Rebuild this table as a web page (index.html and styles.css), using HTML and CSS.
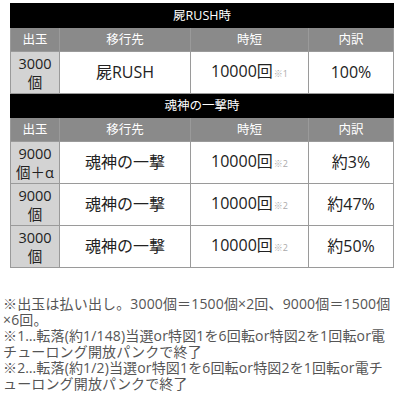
FILE: index.html
```html
<!DOCTYPE html>
<html lang="ja">
<head>
<meta charset="utf-8">
<link rel="stylesheet" href="styles.css">
</head>
<body>
<table class="tbl">
  <colgroup>
    <col class="c1"><col class="c2"><col class="c3"><col class="c4">
  </colgroup>
  <tr class="title"><td colspan="4">屍RUSH時</td></tr>
  <tr class="head"><td>出玉</td><td>移行先</td><td>時短</td><td>内訳</td></tr>
  <tr class="row"><td class="out">3000<br>個</td><td>屍RUSH</td><td>10000回<span class="note">※1</span></td><td>100%</td></tr>
  <tr class="title"><td colspan="4">魂神の一撃時</td></tr>
  <tr class="head"><td>出玉</td><td>移行先</td><td>時短</td><td>内訳</td></tr>
  <tr class="row"><td class="out">9000<br>個＋α</td><td>魂神の一撃</td><td>10000回<span class="note">※2</span></td><td>約3%</td></tr>
  <tr class="row"><td class="out">9000<br>個</td><td>魂神の一撃</td><td>10000回<span class="note">※2</span></td><td>約47%</td></tr>
  <tr class="row"><td class="out">3000<br>個</td><td>魂神の一撃</td><td>10000回<span class="note">※2</span></td><td>約50%</td></tr>
</table>
<div class="notes">
  <p>※出玉は払い出し。3000個＝1500個×2回、9000個＝1500個<br>×6回。</p>
  <p>※1…転落(約1/148)当選or特図1を6回転or特図2を1回転or電<br>チューロング開放パンクで終了</p>
  <p>※2…転落(約1/2)当選or特図1を6回転or特図2を1回転or電チ<br>ューロング開放パンクで終了</p>
</div>
</body>
</html>
```
FILE: styles.css
```css
html, body {
  margin: 0;
  padding: 0;
  background: #fff;
}
body {
  font-family: "Open Sans", "Noto Sans CJK JP", sans-serif;
  color: #222;
  padding-top: 3px;
}
.tbl {
  margin-left: 10px;
  width: 383px;
  border-collapse: collapse;
  table-layout: fixed;
}
.c1 { width: 49px; }
.c2 { width: 131px; }
.c3 { width: 118px; }
.c4 { width: 85px; }
.tbl td {
  border: 1px solid #9a9a9a;
  text-align: center;
  padding: 0;
}
.title td {
  background: #000;
  color: #fff;
  font-size: 12.5px;
  height: 23px;
  border-color: #000;
  line-height: 14px;
}
.head td {
  background: #8a8a8a;
  color: #fff;
  font-size: 12.5px;
  height: 23px;
  line-height: 14px;
}
.row td {
  height: 41px;
  font-size: 16px;
  line-height: 19px;
  background: #fff;
}
.row td.out {
  background: #d3d3d3;
  font-size: 14.5px;
  line-height: 19px;
}
.note {
  font-size: 9px;
  color: #aaa;
  margin-left: 1px;
}
.notes {
  margin: 28px 0 0 3px;
  font-size: 14px;
  line-height: 16px;
  letter-spacing: 0.15px;
  color: #555;
  white-space: nowrap;
}
.notes p {
  margin: 0;
}
```
